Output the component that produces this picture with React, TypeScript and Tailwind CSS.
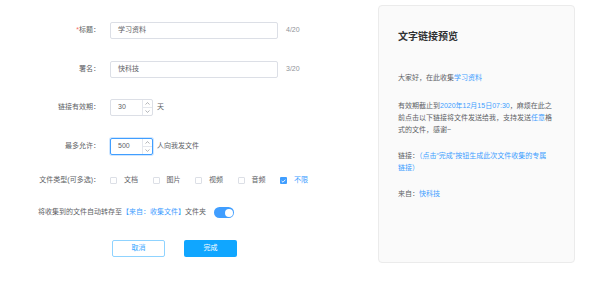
import { useState } from 'react'

const font = { fontFamily: '"Liberation Sans", "Noto Sans CJK SC", sans-serif' }

function Label({ children, required }: { children: React.ReactNode; required?: boolean }) {
  return (
    <div className="w-[101px] shrink-0 text-right text-[7px] text-[#606266] pr-[1px]">
      {required && <span className="text-[#f56c6c]">*</span>}
      {children}
    </div>
  )
}

function NumberBox({ value, focused }: { value: string; focused?: boolean }) {
  return (
    <div
      className={`flex h-[17px] w-[43px] items-stretch rounded-[2px] border bg-white ${
        focused ? 'border-[#409eff] shadow-[0_0_0_1px_#cfe6ff]' : 'border-[#dcdfe6]'
      }`}
    >
      <div className="flex flex-1 items-center pl-[7px] text-[7px] text-[#606266]">{value}</div>
      <div className="flex w-[10px] flex-col border-l border-[#e4e7ed]">
        <div className="flex flex-1 items-center justify-center border-b border-[#e4e7ed]">
          <svg width="5" height="3" viewBox="0 0 5 3" fill="none" stroke="#909399" strokeWidth="0.7">
            <path d="M0.5 2.5 L2.5 0.6 L4.5 2.5" />
          </svg>
        </div>
        <div className="flex flex-1 items-center justify-center">
          <svg width="5" height="3" viewBox="0 0 5 3" fill="none" stroke="#909399" strokeWidth="0.7">
            <path d="M0.5 0.5 L2.5 2.4 L4.5 0.5" />
          </svg>
        </div>
      </div>
    </div>
  )
}

function Check({ label, checked }: { label: string; checked?: boolean }) {
  return (
    <div className="flex w-[42.5px] items-center">
      {checked ? (
        <div className="flex h-[7px] w-[7px] items-center justify-center rounded-[1px] bg-[#409eff]">
          <svg width="5" height="4" viewBox="0 0 5 4" fill="none" stroke="white" strokeWidth="0.9">
            <path d="M0.6 2 L2 3.2 L4.4 0.7" />
          </svg>
        </div>
      ) : (
        <div className="h-[7px] w-[7px] rounded-[1px] border border-[#dcdfe6] bg-white" />
      )}
      <span className={`ml-[7px] text-[7px] ${checked ? 'text-[#409eff]' : 'text-[#606266]'}`}>{label}</span>
    </div>
  )
}

export default function App() {
  const [on, setOn] = useState(true)

  return (
    <div className="flex h-[284px] w-[600px] bg-white" style={font}>
      <div className="w-[378px] shrink-0">
        <div className="mt-[22px] flex items-center">
          <Label required>标题：</Label>
          <div className="ml-[9px] flex h-[17px] w-[168px] items-center rounded-[2px] border border-[#dcdfe6] pl-[7px] text-[7px] text-[#606266]">
            学习资料
          </div>
          <span className="ml-[8px] text-[7px] text-[#909399]">4/20</span>
        </div>

        <div className="mt-[22px] flex items-center">
          <Label>署名：</Label>
          <div className="ml-[9px] flex h-[17px] w-[168px] items-center rounded-[2px] border border-[#dcdfe6] pl-[7px] text-[7px] text-[#606266]">
            快科技
          </div>
          <span className="ml-[8px] text-[7px] text-[#909399]">3/20</span>
        </div>

        <div className="mt-[21px] flex items-center">
          <Label>链接有效期：</Label>
          <div className="ml-[9px]">
            <NumberBox value="30" />
          </div>
          <span className="ml-[4px] text-[7px] text-[#606266]">天</span>
        </div>

        <div className="mt-[22px] flex items-center">
          <Label>最多允许：</Label>
          <div className="ml-[9px]">
            <NumberBox value="500" focused />
          </div>
          <span className="ml-[4px] text-[7px] text-[#606266]">人向我发文件</span>
        </div>

        <div className="mt-[17px] flex h-[17px] items-center">
          <Label>文件类型(可多选)：</Label>
          <div className="ml-[9px] flex items-center">
            <Check label="文档" />
            <Check label="图片" />
            <Check label="视频" />
            <Check label="音频" />
            <Check label="不限" checked />
          </div>
        </div>

        <div className="mt-[15px] flex h-[17px] items-center pl-[38px] text-[7px] text-[#606266]">
          <span>将收集到的文件自动转存至</span>
          <span className="text-[#409eff]">【来自：收集文件】</span>
          <span>文件夹</span>
          <button
            onClick={() => setOn(!on)}
            className={`ml-[8px] flex h-[11px] w-[20px] items-center rounded-full px-[1.5px] ${
              on ? 'justify-end bg-[#409eff]' : 'justify-start bg-[#dcdfe6]'
            }`}
          >
            <span className="h-[8px] w-[8px] rounded-full bg-white" />
          </button>
        </div>

        <div className="mt-[19px] flex items-center pl-[112px]">
          <button className="h-[17px] w-[53px] rounded-[2px] border border-[#8fd3ff] bg-white text-[7px] text-[#3aa8ff]">
            取消
          </button>
          <button className="ml-[19px] h-[17px] w-[53px] rounded-[2px] bg-[#10a6ff] text-[7px] text-white">
            完成
          </button>
        </div>
      </div>

      <div className="mt-[5px] h-[258px] w-[197px] rounded-[4px] border border-[#ebebeb] bg-[#fafafa] px-[19px] pt-[24px] text-[7px] leading-[12px] text-[#606266]">
        <div className="text-[10px] font-bold leading-[14px] text-[#303133]">文字链接预览</div>

        <div className="mt-[28px]">
          大家好，在此收集<span className="text-[#409eff]">学习资料</span>
        </div>

        <div className="mt-[16px] whitespace-nowrap leading-[12px]">
          <div>
            有效期截止到<span className="text-[#409eff]">2020年12月15日07:30</span>，麻烦在此之
          </div>
          <div>
            前点击以下链接将文件发送给我，支持发送<span className="text-[#409eff]">任意</span>格
          </div>
          <div>式的文件，感谢~</div>
        </div>

        <div className="mt-[14px] whitespace-nowrap">
          <div>
            链接：<span className="text-[#409eff]">（点击“完成”按钮生成此次文件收集的专属</span>
          </div>
          <div className="text-[#409eff]">链接）</div>
        </div>

        <div className="mt-[14px]">
          来自：<span className="text-[#409eff]">快科技</span>
        </div>
      </div>
    </div>
  )
}
